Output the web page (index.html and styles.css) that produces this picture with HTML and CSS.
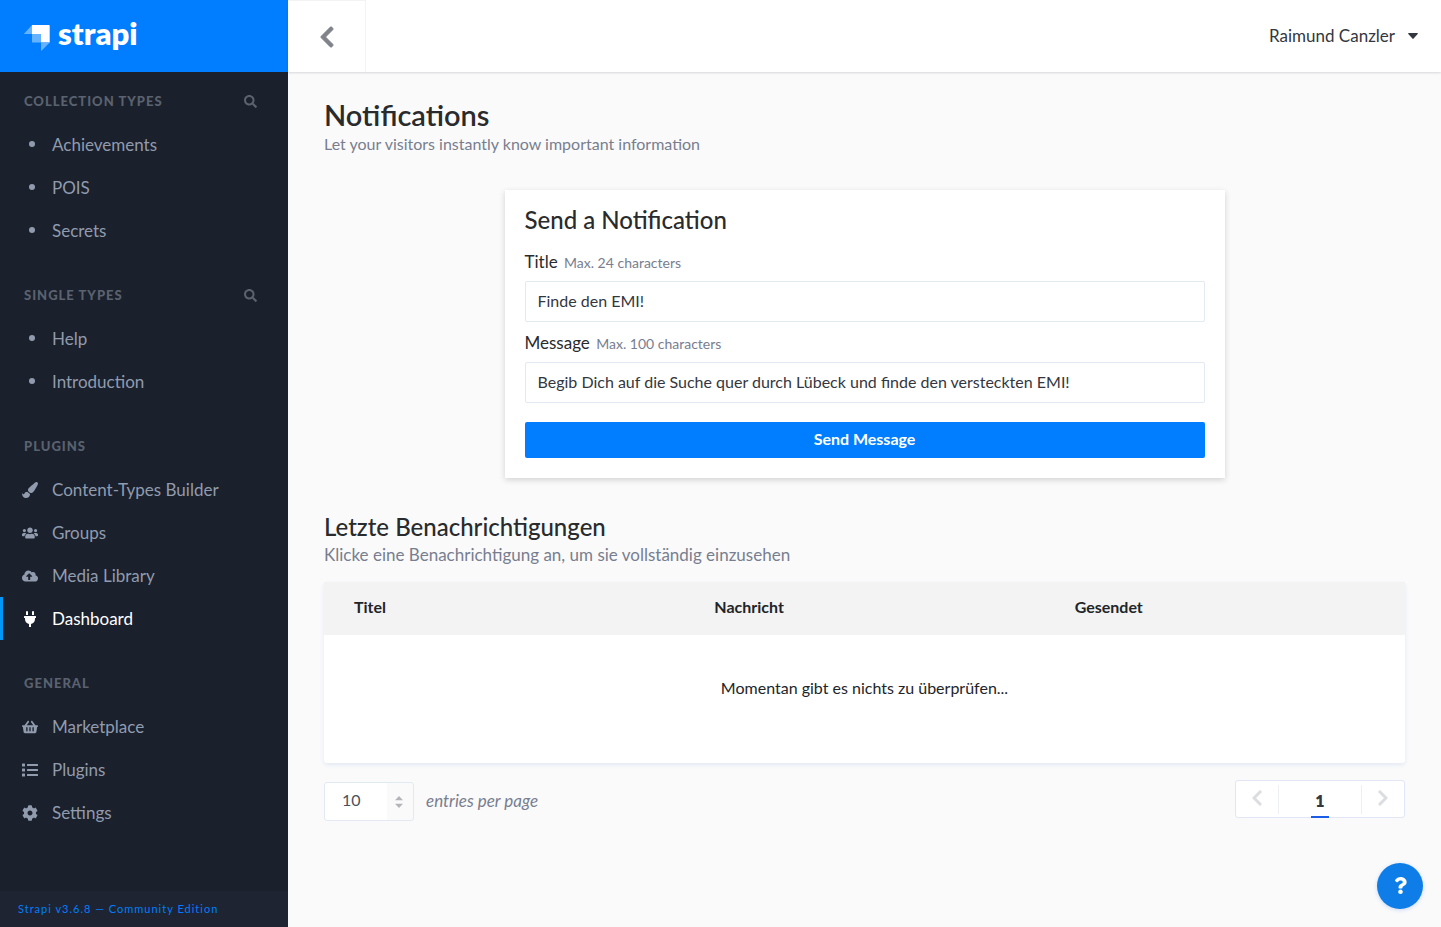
FILE: index.html
```html
<!DOCTYPE html>
<html lang="en">
<head>
<meta charset="utf-8">
<meta name="viewport" content="width=device-width, initial-scale=1">
<title>Notifications</title>
<link rel="stylesheet" href="styles.css">
</head>
<body>
<div class="app">
  <aside class="sidebar">
    <a class="brand" href="#" aria-label="strapi">
      <svg class="brand-mark" viewBox="0 0 26 26" aria-hidden="true">
        <path fill="#fff" d="M8 0h17a.7.7 0 0 1 .7.7V17.500H17V9H8z"/>
        <path fill="#66b2ff" d="M8 0v9H.4a.3.3 0 0 1-.2-.5zM8 9h9v8.500H8.500A.5.5 0 0 1 8 17zM17 17.500h8.700l-8.200 8.200a.3.3 0 0 1-.5-.2z"/>
      </svg>
      <span class="brand-name">strapi</span>
    </a>
    <nav class="menu">
      <section class="group">
        <h2 class="group-title">Collection Types
          <button class="search" type="button" aria-label="Search collection types"><svg viewBox="0 0 512 512"><use href="#i-search"/></svg></button>
        </h2>
        <a class="item" href="#"><span class="bullet"></span>Achievements</a>
        <a class="item" href="#"><span class="bullet"></span>POIS</a>
        <a class="item" href="#"><span class="bullet"></span>Secrets</a>
      </section>
      <section class="group">
        <h2 class="group-title">Single Types
          <button class="search" type="button" aria-label="Search single types"><svg viewBox="0 0 512 512"><use href="#i-search"/></svg></button>
        </h2>
        <a class="item" href="#"><span class="bullet"></span>Help</a>
        <a class="item" href="#"><span class="bullet"></span>Introduction</a>
      </section>
      <section class="group">
        <h2 class="group-title">Plugins</h2>
        <a class="item" href="#"><svg class="icon" viewBox="0 0 512 512"><path d="M167.020 309.340c-40.120 2.580-76.530 17.860-97.190 72.300-2.350 6.210-8 9.980-14.590 9.980-11.110 0-45.460-27.670-55.250-34.350C0 439.620 37.930 512 128 512c75.860 0 128-43.770 128-120.190 0-3.110-.65-6.080-.97-9.130l-88.010-73.340zM457.890 0c-15.160 0-29.370 6.710-40.210 16.450C213.270 199.050 192 203.340 192 257.090c0 13.700 3.250 26.760 8.730 38.700l63.820 53.180c7.210 1.800 14.640 3.030 22.390 3.030 62.110 0 98.110-45.470 211.160-256.460 7.380-14.350 13.900-29.850 13.900-45.990C512 20.640 486 0 457.890 0z"/></svg>Content-Types Builder</a>
        <a class="item" href="#"><svg class="icon" viewBox="0 0 640 512"><path d="M96 224c35.300 0 64-28.700 64-64s-28.700-64-64-64-64 28.700-64 64 28.700 64 64 64zm448 0c35.300 0 64-28.700 64-64s-28.700-64-64-64-64 28.700-64 64 28.700 64 64 64zm32 32h-64c-17.600 0-33.500 7.100-45.100 18.600 40.300 22.100 68.900 62 75.100 109.400h66c17.700 0 32-14.300 32-32v-32c0-35.300-28.700-64-64-64zm-256 0c61.900 0 112-50.100 112-112S381.900 32 320 32 208 82.100 208 144s50.100 112 112 112zm76.800 32h-8.300c-20.800 10-43.900 16-68.500 16s-47.600-6-68.500-16h-8.300C179.600 288 128 339.600 128 403.200V432c0 26.500 21.500 48 48 48h288c26.500 0 48-21.500 48-48v-28.800c0-63.600-51.600-115.200-115.200-115.200zm-223.700-13.400C161.500 263.100 145.600 256 128 256H64c-35.300 0-64 28.700-64 64v32c0 17.700 14.300 32 32 32h65.900c6.300-47.400 34.900-87.300 75.200-109.400z"/></svg>Groups</a>
        <a class="item" href="#"><svg class="icon" viewBox="0 0 640 512"><path d="M537.600 226.600c4.100-10.700 6.400-22.400 6.400-34.600 0-53-43-96-96-96-19.700 0-38.100 6-53.300 16.200C367 64.200 315.300 32 256 32c-88.400 0-160 71.600-160 160 0 2.700.1 5.400.2 8.100C40.200 219.800 0 273.200 0 336c0 79.500 64.500 144 144 144h368c70.700 0 128-57.300 128-128 0-61.900-44-113.600-102.400-125.400zM393.400 288H328v112c0 8.800-7.200 16-16 16h-48c-8.800 0-16-7.200-16-16V288h-65.400c-14.300 0-21.400-17.200-11.300-27.300l105.400-105.400c6.200-6.200 16.400-6.200 22.600 0l105.400 105.400c10.100 10.100 2.900 27.300-11.300 27.300z"/></svg>Media Library</a>
        <a class="item active" href="#" aria-current="page"><svg class="icon" viewBox="0 0 384 512"><path d="M320,32a32,32,0,0,0-64,0v96h64Zm48,128H16A16,16,0,0,0,0,176v32a16,16,0,0,0,16,16H32v32A160.070,160.070,0,0,0,160,412.800V512h64V412.800A160.070,160.070,0,0,0,352,256V224h16a16,16,0,0,0,16-16V176A16,16,0,0,0,368,160ZM128,32a32,32,0,0,0-64,0v96h64Z"/></svg>Dashboard</a>
      </section>
      <section class="group">
        <h2 class="group-title">General</h2>
        <a class="item" href="#"><svg class="icon" viewBox="0 0 576 512"><path d="M576 216v16c0 13.255-10.745 24-24 24h-8l-26.113 182.788C514.509 462.435 494.257 480 470.370 480H105.630c-23.887 0-44.139-17.565-47.518-41.212L32 256h-8c-13.255 0-24-10.745-24-24v-16c0-13.255 10.745-24 24-24h67.341l106.780-146.821c10.395-14.292 30.407-17.453 44.701-7.058 14.293 10.395 17.453 30.408 7.058 44.701L170.477 192h235.046L326.120 82.821c-10.395-14.292-7.234-34.306 7.059-44.701 14.291-10.395 34.306-7.235 44.701 7.058L484.659 192H552c13.255 0 24 10.745 24 24zM312 392V280c0-13.255-10.745-24-24-24s-24 10.745-24 24v112c0 13.255 10.745 24 24 24s24-10.745 24-24zm112 0V280c0-13.255-10.745-24-24-24s-24 10.745-24 24v112c0 13.255 10.745 24 24 24s24-10.745 24-24zm-224 0V280c0-13.255-10.745-24-24-24s-24 10.745-24 24v112c0 13.255 10.745 24 24 24s24-10.745 24-24z"/></svg>Marketplace</a>
        <a class="item" href="#"><svg class="icon" viewBox="0 0 512 512"><path d="M80 368H16a16 16 0 0 0-16 16v64a16 16 0 0 0 16 16h64a16 16 0 0 0 16-16v-64a16 16 0 0 0-16-16zm0-320H16A16 16 0 0 0 0 64v64a16 16 0 0 0 16 16h64a16 16 0 0 0 16-16V64a16 16 0 0 0-16-16zm0 160H16a16 16 0 0 0-16 16v64a16 16 0 0 0 16 16h64a16 16 0 0 0 16-16v-64a16 16 0 0 0-16-16zm416 176H176a16 16 0 0 0-16 16v32a16 16 0 0 0 16 16h320a16 16 0 0 0 16-16v-32a16 16 0 0 0-16-16zm0-320H176a16 16 0 0 0-16 16v32a16 16 0 0 0 16 16h320a16 16 0 0 0 16-16V80a16 16 0 0 0-16-16zm0 160H176a16 16 0 0 0-16 16v32a16 16 0 0 0 16 16h320a16 16 0 0 0 16-16v-32a16 16 0 0 0-16-16z"/></svg>Plugins</a>
        <a class="item" href="#"><svg class="icon" viewBox="0 0 512 512"><path d="M487.400 315.700l-42.600-24.600c4.300-23.200 4.300-47 0-70.200l42.600-24.600c4.900-2.800 7.100-8.600 5.500-14-11.100-35.600-30-67.800-54.700-94.600-3.800-4.100-10-5.100-14.800-2.300L380.800 110c-17.900-15.400-38.500-27.300-60.800-35.100V25.800c0-5.600-3.900-10.500-9.400-11.700-36.700-8.200-74.300-7.800-109.200 0-5.500 1.200-9.400 6.100-9.400 11.700V75c-22.200 7.900-42.800 19.800-60.800 35.100L88.700 85.500c-4.900-2.800-11-1.900-14.800 2.300-24.700 26.700-43.600 58.900-54.700 94.600-1.700 5.400.6 11.200 5.500 14L67.300 221c-4.300 23.200-4.300 47 0 70.200l-42.600 24.600c-4.900 2.800-7.100 8.600-5.500 14 11.100 35.600 30 67.800 54.700 94.600 3.800 4.100 10 5.100 14.800 2.300l42.600-24.600c17.900 15.400 38.500 27.300 60.800 35.100v49.200c0 5.600 3.900 10.500 9.400 11.700 36.700 8.200 74.300 7.800 109.200 0 5.500-1.200 9.400-6.100 9.400-11.700v-49.200c22.200-7.900 42.800-19.800 60.800-35.100l42.600 24.600c4.900 2.800 11 1.900 14.800-2.300 24.700-26.700 43.600-58.900 54.700-94.600 1.500-5.500-.7-11.300-5.600-14.100zM256 336c-44.100 0-80-35.900-80-80s35.900-80 80-80 80 35.900 80 80-35.900 80-80 80z"/></svg>Settings</a>
      </section>
    </nav>
    <footer class="version"><a href="#">Strapi v3.6.8 — Community Edition</a></footer>
  </aside>

  <div class="page">
    <header class="topbar">
      <button class="back" type="button" aria-label="Back"><svg viewBox="0 0 320 512"><use href="#i-chevron"/></svg></button>
      <button class="user" type="button">Raimund Canzler <svg viewBox="0 0 10 6" aria-hidden="true"><path d="M.8 0h8.400a.6.6 0 0 1 .5 1L5.600 5.600a.8.8 0 0 1-1.200 0L.3 1A.6.6 0 0 1 .8 0z"/></svg></button>
    </header>

    <main class="content">
      <h1 class="title">Notifications</h1>
      <p class="subtitle">Let your visitors instantly know important information</p>

      <form class="card">
        <h2 class="heading">Send a Notification</h2>
        <div class="fields">
          <div class="field">
            <label class="label" for="title">Title <small class="hint">Max. 24 characters</small></label>
            <input class="input" id="title" type="text" maxlength="24" value="Finde den EMI!">
          </div>
          <div class="field">
            <label class="label" for="message">Message <small class="hint">Max. 100 characters</small></label>
            <input class="input" id="message" type="text" maxlength="100" value="Begib Dich auf die Suche quer durch Lübeck und finde den versteckten EMI!">
          </div>
        </div>
        <button class="send" type="button">Send Message</button>
      </form>

      <h2 class="heading">Letzte Benachrichtigungen</h2>
      <p class="lead">Klicke eine Benachrichtigung an, um sie vollständig einzusehen</p>

      <table class="table">
        <thead><tr><th scope="col">Titel</th><th scope="col">Nachricht</th><th scope="col">Gesendet</th></tr></thead>
        <tbody><tr><td colspan="3">Momentan gibt es nichts zu überprüfen...</td></tr></tbody>
      </table>

      <div class="table-footer">
        <div class="per-page">
          <span class="select-wrap">
            <select class="select" id="limit"><option>10</option><option>20</option><option>50</option><option>100</option></select>
            <svg class="arrows" viewBox="0 0 8 12" aria-hidden="true"><path d="M4 0l4 4.200H0zM4 12L0 7.800h8z"/></svg>
          </span>
          <label for="limit">entries per page</label>
        </div>
        <nav class="pager" aria-label="Pagination">
          <button class="step" type="button" aria-label="Previous page" disabled><svg viewBox="0 0 10 16"><path d="M9 1L2 8l7 7"/></svg></button>
          <span class="pages"><a class="current" href="#" aria-current="page">1</a></span>
          <button class="step" type="button" aria-label="Next page" disabled><svg viewBox="0 0 10 16"><path d="M1 1l7 7-7 7"/></svg></button>
        </nav>
      </div>
    </main>
  </div>
</div>

<button class="help" type="button" aria-label="Help"><svg viewBox="0 0 384 512"><path d="M202.021 0C122.202 0 70.503 32.703 29.914 91.026c-7.363 10.580-5.093 25.086 5.178 32.874l43.138 32.709c10.373 7.865 25.132 6.026 33.253-4.148 25.049-31.381 43.630-49.449 82.757-49.449 30.764 0 68.816 19.799 68.816 49.631 0 22.552-18.617 34.134-48.993 51.164-35.423 19.860-82.299 44.576-82.299 106.405V320c0 13.255 10.745 24 24 24h72.471c13.255 0 24-10.745 24-24v-5.773c0-42.860 125.268-44.645 125.268-160.627C377.504 66.256 286.902 0 202.021 0zM192 373.459c-38.196 0-69.271 31.075-69.271 69.271 0 38.195 31.075 69.270 69.271 69.270s69.271-31.075 69.271-69.271-31.075-69.270-69.271-69.270z"/></svg></button>

<svg class="defs" aria-hidden="true">
  <symbol id="i-search" viewBox="0 0 512 512"><path d="M505 442.700L405.300 343c-4.500-4.500-10.600-7-17-7H372c27.600-35.300 44-79.700 44-128C416 93.100 322.900 0 208 0S0 93.100 0 208s93.100 208 208 208c48.300 0 92.700-16.400 128-44v16.300c0 6.400 2.500 12.500 7 17l99.700 99.700c9.400 9.400 24.600 9.400 33.900 0l28.300-28.300c9.400-9.400 9.400-24.600.1-34zM208 336c-70.700 0-128-57.200-128-128 0-70.700 57.200-128 128-128 70.700 0 128 57.200 128 128 0 70.700-57.200 128-128 128z"/></symbol>
  <symbol id="i-chevron" viewBox="0 0 320 512"><path d="M34.520 239.030L228.870 44.690c9.370-9.370 24.570-9.370 33.940 0l22.670 22.670c9.360 9.360 9.370 24.520.04 33.900L131.490 256l154.020 154.750c9.340 9.380 9.320 24.540-.04 33.900l-22.670 22.670c-9.370 9.370-24.570 9.370-33.940 0L34.520 272.970c-9.370-9.370-9.370-24.570 0-33.940z"/></symbol>
</svg>
</body>
</html>
```

FILE: styles.css
```css
*, *::before, *::after { box-sizing: border-box; }

body {
  margin: 0;
  background: #fafafb;
  color: #292b2c;
  font-family: Lato, "Open Sans", sans-serif;
  font-size: 16px;
  line-height: 24px;
}

h1, h2, p { margin: 0; }
a { color: inherit; text-decoration: none; }
button, input, select { font: inherit; color: inherit; }
button { padding: 0; border: 0; background: none; cursor: pointer; }
svg { fill: currentColor; }
.defs { display: none; }

.app { display: flex; min-height: 100vh; }

/* Sidebar */
.sidebar {
  display: flex;
  flex-direction: column;
  flex: 0 0 288px;
  background: #1a202c;
  color: #919bae;
}
.brand {
  display: flex;
  align-items: center;
  gap: 8px;
  height: 72px;
  padding: 0 24px;
  background: #007eff;
  color: #fff;
}
.brand-mark { width: 26px; height: 26px; margin-top: 4px; }
.brand-name { padding-bottom: 6px; font-size: 31px; font-weight: 800; line-height: 32px; }

.menu { display: flex; flex-direction: column; gap: 22px; flex: 1; padding-top: 8px; }
.group-title {
  display: flex;
  align-items: center;
  justify-content: space-between;
  height: 43px;
  padding: 0 31px 1px 24px;
  color: #5b626f;
  font-size: 13px;
  font-weight: 900;
  letter-spacing: 1px;
  text-transform: uppercase;
}
.search { display: flex; }
.search svg { width: 13px; height: 13px; }
.item {
  display: flex;
  align-items: center;
  gap: 14px;
  height: 43px;
  padding-left: 19px;
  border-left: 3px solid transparent;
  font-size: 17px;
}
.item.active { border-left-color: #0097f7; color: #fff; }
.icon { width: 16px; height: 16px; }
.bullet { display: flex; justify-content: center; width: 20px; margin-right: -4px; padding-bottom: 2px; }
.bullet::before { content: ""; width: 6px; height: 6px; border-radius: 50%; background: currentColor; }
.version {
  height: 36px;
  padding: 0 18px;
  background: #1e2431;
  color: #007eff;
  font-size: 11px;
  line-height: 36px;
  letter-spacing: 1px;
}

/* Top bar */
.page { flex: 1; min-width: 0; }
.topbar {
  display: flex;
  justify-content: space-between;
  height: 72px;
  background: #fff;
  box-shadow: 0 1px 2px rgba(40, 42, 49, 0.16);
}
.back {
  display: flex;
  align-items: center;
  justify-content: center;
  width: 78px;
  border-top: 1px solid #f3f3f4;
  border-right: 1px solid #f3f3f4;
  color: #81838a;
}
.back svg { width: 16px; height: 24px; stroke: currentColor; stroke-width: 14; }
.user {
  display: flex;
  align-items: center;
  gap: 13px;
  padding: 0 23px;
  color: #333740;
  font-size: 17px;
}
.user svg { width: 10px; height: 6px; }

/* Content */
.content { padding: 27px 36px; }
.title { margin-bottom: 1px; font-size: 29px; font-weight: 600; line-height: 32px; }
.subtitle, .lead { color: #787e8f; }
.lead { font-size: 17px; }
.heading { font-size: 24px; font-weight: 500; line-height: 32px; }

.card {
  max-width: 720px;
  margin: 34px auto 33px;
  padding: 14px 20px 20px;
  background: #fff;
  box-shadow: 0 2px 6px rgba(0, 0, 0, 0.16);
}
.fields { display: grid; gap: 8px; margin: 13px 0 19px; }
.field { display: grid; gap: 6px; }
.label { font-size: 17px; line-height: 26px; }
.hint { margin-left: 2px; color: #787e8f; font-size: 14px; line-height: 16px; }
.input {
  width: 100%;
  height: 41px;
  padding: 0 12px 2px;
  border: 1px solid #e3e9f3;
  border-radius: 2px;
  background: #fff;
  color: #333740;
}
.send {
  display: block;
  width: 100%;
  height: 36px;
  padding-bottom: 2px;
  border-radius: 2px;
  background: #007eff;
  color: #fff;
  font-weight: 700;
}

/* Table */
.table {
  width: 100%;
  margin-top: 15px;
  border-collapse: collapse;
  table-layout: fixed;
  border-radius: 3px;
  background: #fff;
  box-shadow: 0 2px 4px #e3e9f3;
}
.table th {
  height: 53px;
  padding: 0 30px 4px;
  background: #f3f3f3;
  color: #212529;
  font-weight: 700;
  text-align: left;
}
.table td { height: 128px; padding: 0 30px 22px; color: #212529; text-align: center; }

.table-footer { display: flex; align-items: flex-start; justify-content: space-between; margin-top: 17px; }
.per-page {
  display: flex;
  align-items: center;
  gap: 12px;
  margin-top: 2px;
  color: #787e8f;
  font-size: 17px;
  font-style: italic;
}
.per-page label { padding-bottom: 2px; }
.select-wrap { position: relative; display: flex; color: #b3b5b9; font-style: normal; }
.select {
  width: 90px;
  height: 39px;
  padding: 0 17px 3px;
  appearance: none;
  border: 1px solid #e3e9f3;
  border-radius: 3px;
  background: linear-gradient(to right, #fff 62px, #fafafb 62px);
  color: #4b515a;
  font-size: 16px;
}
.arrows { position: absolute; top: 14px; right: 11px; width: 8px; height: 12px; pointer-events: none; }

.pager {
  display: flex;
  align-items: center;
  width: 170px;
  height: 38px;
  border: 1px solid #e1e5f5;
  border-radius: 3px;
  background: #fff;
}
.step { display: flex; justify-content: center; flex: 1; padding-bottom: 2px; color: #dcdde0; }
.step svg { width: 10px; height: 16px; fill: none; stroke: currentColor; stroke-width: 3; }
.pages {
  display: flex;
  justify-content: center;
  width: 84px;
  height: 29px;
  border-right: 1px solid #edeff2;
  border-left: 1px solid #edeff2;
}
.current {
  width: 18px;
  height: 33px;
  border-bottom: 2px solid #1c5de7;
  color: #333740;
  font-weight: 800;
  line-height: 31px;
  text-align: center;
}

.help {
  position: fixed;
  right: 18px;
  bottom: 18px;
  display: flex;
  align-items: center;
  justify-content: center;
  width: 46px;
  height: 46px;
  padding-bottom: 1px;
  border-radius: 50%;
  background: #0e7de7;
  color: #fff;
  box-shadow: 0 1px 4px rgba(0, 80, 200, 0.2);
}
.help svg { width: 13px; height: 17px; }
```
